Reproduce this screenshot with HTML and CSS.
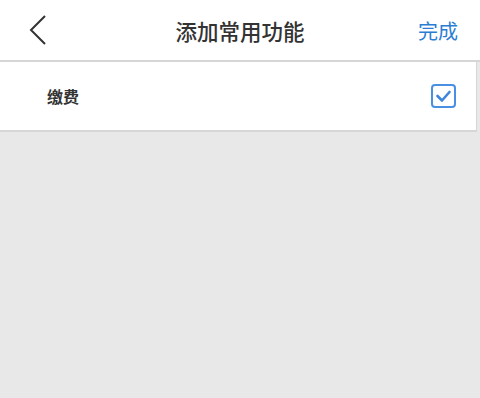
FILE: index.html
```html
<!DOCTYPE html>
<html lang="zh">
<head>
  <meta charset="UTF-8">
  <title>添加常用功能</title>
  <link rel="stylesheet" href="styles.css">
</head>
<body>
  <div class="nav-bar">
    <span class="back">
      <svg width="18" height="30" viewBox="0 0 18 30">
        <path d="M16 1 L2 15 L16 29" fill="none" stroke="#333" stroke-width="2"/>
      </svg>
    </span>
    <h1>添加常用功能</h1>
    <span class="done">完成</span>
  </div>

  <div class="list">
    <div class="item">
      <span class="item-name">缴费</span>
      <span class="check">
        <svg width="25" height="24" viewBox="0 0 25 24">
          <rect x="1" y="1" width="23" height="22" rx="3" fill="#fff" stroke="#4a90e2" stroke-width="2"/>
          <path d="M6.5 12 L11 16.5 L18.5 8" fill="none" stroke="#3d86dc" stroke-width="2.6" stroke-linecap="round" stroke-linejoin="round"/>
        </svg>
      </span>
    </div>
  </div>
</body>
</html>
```

FILE: styles.css
```css
* {
  box-sizing: border-box;
}

body {
  margin: 0;
  font-family: "Noto Sans CJK SC", "Noto Sans", sans-serif;
  background-color: #e8e8e8;
  height: 398px;
}

.nav-bar {
  height: 62px;
  background-color: #fff;
  display: grid;
  grid-template-columns: 1fr auto 1fr;
  align-items: center;
  padding: 0 22px;
  border-bottom: 2px solid #d6d6d6;
}

.back {
  display: flex;
  margin-left: 7px;
}

.nav-bar h1 {
  margin: 0;
  font-size: 21.5px;
  font-weight: 500;
  color: #333;
}

.done {
  text-align: right;
  font-size: 20px;
  color: #2a7dd3;
}

.list {
  width: 477px;
  background-color: #fff;
  border-right: 1px solid #d6d6d6;
  border-bottom: 2px solid #d6d6d6;
}

.item {
  height: 68px;
  display: flex;
  align-items: center;
  justify-content: space-between;
  padding: 0 20px 0 47px;
}

.item-name {
  font-size: 16px;
  font-weight: bold;
  color: #333;
}

.check {
  display: flex;
}
```
